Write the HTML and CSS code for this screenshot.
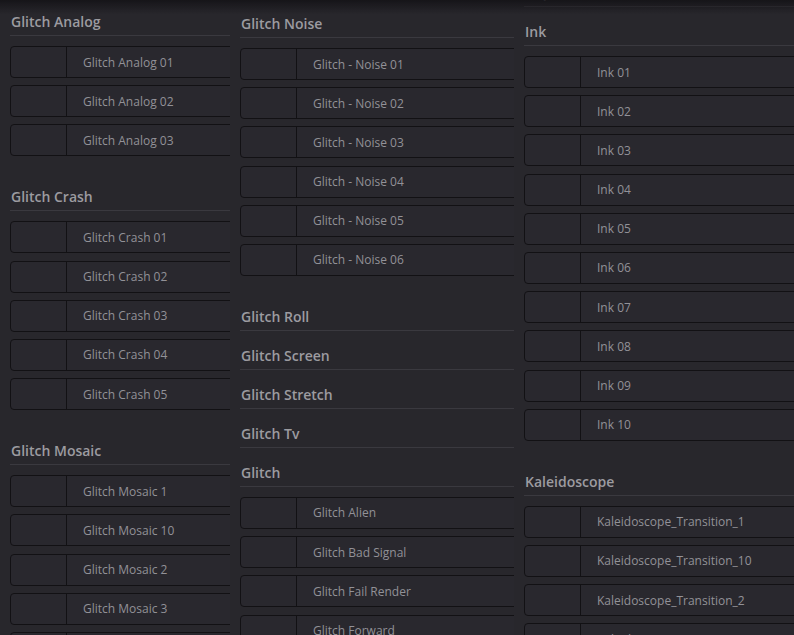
FILE: index.html
```html
<!DOCTYPE html>
<html>
<head>
<meta charset="utf-8">
<link rel="stylesheet" href="styles.css">
</head>
<body>
<div class="page">
  <div class="col col1">
    <section class="sec">
      <h2 class="sh">Glitch Analog</h2>
      <div class="items">
        <div class="item"><div class="thumb"></div><span class="name">Glitch Analog 01</span></div>
        <div class="item"><div class="thumb"></div><span class="name">Glitch Analog 02</span></div>
        <div class="item"><div class="thumb"></div><span class="name">Glitch Analog 03</span></div>
      </div>
    </section>
    <section class="sec">
      <h2 class="sh">Glitch Crash</h2>
      <div class="items">
        <div class="item"><div class="thumb"></div><span class="name">Glitch Crash 01</span></div>
        <div class="item"><div class="thumb"></div><span class="name">Glitch Crash 02</span></div>
        <div class="item"><div class="thumb"></div><span class="name">Glitch Crash 03</span></div>
        <div class="item"><div class="thumb"></div><span class="name">Glitch Crash 04</span></div>
        <div class="item"><div class="thumb"></div><span class="name">Glitch Crash 05</span></div>
      </div>
    </section>
    <section class="sec">
      <h2 class="sh">Glitch Mosaic</h2>
      <div class="items">
        <div class="item"><div class="thumb"></div><span class="name">Glitch Mosaic 1</span></div>
        <div class="item"><div class="thumb"></div><span class="name">Glitch Mosaic 10</span></div>
        <div class="item"><div class="thumb"></div><span class="name">Glitch Mosaic 2</span></div>
        <div class="item"><div class="thumb"></div><span class="name">Glitch Mosaic 3</span></div>
        <div class="item"><div class="thumb"></div><span class="name">Glitch Mosaic 4</span></div>
      </div>
    </section>
  </div>

  <div class="col col2">
    <section class="sec">
      <h2 class="sh">Glitch Noise</h2>
      <div class="items">
        <div class="item"><div class="thumb"></div><span class="name">Glitch - Noise 01</span></div>
        <div class="item"><div class="thumb"></div><span class="name">Glitch - Noise 02</span></div>
        <div class="item"><div class="thumb"></div><span class="name">Glitch - Noise 03</span></div>
        <div class="item"><div class="thumb"></div><span class="name">Glitch - Noise 04</span></div>
        <div class="item"><div class="thumb"></div><span class="name">Glitch - Noise 05</span></div>
        <div class="item"><div class="thumb"></div><span class="name">Glitch - Noise 06</span></div>
      </div>
    </section>
    <section class="sec"><h2 class="sh">Glitch Roll</h2></section>
    <section class="sec"><h2 class="sh">Glitch Screen</h2></section>
    <section class="sec"><h2 class="sh">Glitch Stretch</h2></section>
    <section class="sec"><h2 class="sh">Glitch Tv</h2></section>
    <section class="sec">
      <h2 class="sh">Glitch</h2>
      <div class="items">
        <div class="item"><div class="thumb"></div><span class="name">Glitch Alien</span></div>
        <div class="item"><div class="thumb"></div><span class="name">Glitch Bad Signal</span></div>
        <div class="item"><div class="thumb"></div><span class="name">Glitch Fail Render</span></div>
        <div class="item"><div class="thumb"></div><span class="name">Glitch Forward</span></div>
      </div>
    </section>
  </div>

  <div class="col col3">
    <section class="sec"><h2 class="sh">Impact</h2></section>
    <section class="sec">
      <h2 class="sh">Ink</h2>
      <div class="items">
        <div class="item"><div class="thumb"></div><span class="name">Ink 01</span></div>
        <div class="item"><div class="thumb"></div><span class="name">Ink 02</span></div>
        <div class="item"><div class="thumb"></div><span class="name">Ink 03</span></div>
        <div class="item"><div class="thumb"></div><span class="name">Ink 04</span></div>
        <div class="item"><div class="thumb"></div><span class="name">Ink 05</span></div>
        <div class="item"><div class="thumb"></div><span class="name">Ink 06</span></div>
        <div class="item"><div class="thumb"></div><span class="name">Ink 07</span></div>
        <div class="item"><div class="thumb"></div><span class="name">Ink 08</span></div>
        <div class="item"><div class="thumb"></div><span class="name">Ink 09</span></div>
        <div class="item"><div class="thumb"></div><span class="name">Ink 10</span></div>
      </div>
    </section>
    <section class="sec">
      <h2 class="sh">Kaleidoscope</h2>
      <div class="items">
        <div class="item"><div class="thumb"></div><span class="name">Kaleidoscope_Transition_1</span></div>
        <div class="item"><div class="thumb"></div><span class="name">Kaleidoscope_Transition_10</span></div>
        <div class="item"><div class="thumb"></div><span class="name">Kaleidoscope_Transition_2</span></div>
        <div class="item"><div class="thumb"></div><span class="name">Kaleidoscope_Transition_3</span></div>
      </div>
    </section>
  </div>
</div>
<div class="shade"></div>
</body>
</html>
```
FILE: styles.css
```css
html, body {
  margin: 0;
  padding: 0;
}
body {
  background: #28272c;
  height: 635px;
  overflow: hidden;
  font-family: "Open Sans", "Noto Sans", sans-serif;
}
.page {
  display: grid;
  grid-template-columns: 220px 274px 1fr;
  column-gap: 10px;
  padding-left: 10px;
  height: 635px;
  overflow: hidden;
  align-items: start;
}
.col {
  overflow: hidden;
  min-width: 0;
}
.col1 { margin-top: -3px; }
.col2 { margin-top: -1px; }
.col3 { margin-top: -32px; }

.sh {
  margin: 0;
  padding: 15px 0 3px 1px;
  font-size: 14px;
  line-height: 20px;
  font-weight: 600;
  color: #9c9ba0;
  border-bottom: 1px solid #3a393f;
  white-space: nowrap;
}
.items {
  display: flex;
  flex-direction: column;
  gap: 7.2px;
  padding: 10px 0 16px;
}
.item {
  display: flex;
  align-items: center;
  height: 32px;
  box-sizing: border-box;
  width: calc(100% + 40px);
  border: 1.5px solid #121114;
  border-radius: 4px;
  background: #29282e;
}
.thumb {
  width: 55px;
  height: 100%;
  flex: none;
  border-right: 1.5px solid #121114;
}
.name {
  padding-left: 16px;
  font-size: 12px;
  color: #929197;
  white-space: nowrap;
}
.shade {
  position: fixed;
  left: 0;
  right: 0;
  top: 0;
  height: 14px;
  background: linear-gradient(to bottom, rgba(20, 19, 23, 0.9), rgba(20, 19, 23, 0));
  pointer-events: none;
}
```
